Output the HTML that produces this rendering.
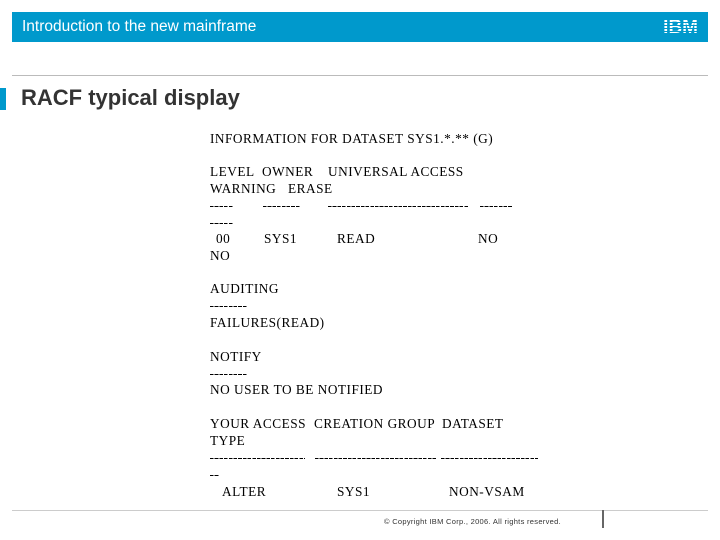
<!DOCTYPE html><html><head><style>
body{margin:0;width:720px;height:540px;background:#fff;position:relative;overflow:hidden;font-family:"Liberation Sans",sans-serif}
.bar{position:absolute;left:12px;top:12px;width:696px;height:30px;background:#0099cc}
.bar span{position:absolute;left:10px;top:6px;color:#fff;font-size:15.5px;font-weight:300}
.ibm{position:absolute;right:10px;top:5px;font-weight:bold;font-size:19px;background:repeating-linear-gradient(#fff 0 2px,transparent 2px 3px);-webkit-background-clip:text;background-clip:text;-webkit-text-fill-color:transparent}
.t{position:absolute;font-family:"Liberation Serif",serif;font-size:13.3px;color:#000;white-space:pre;line-height:17px;letter-spacing:0.5px}
.d{position:absolute;height:1px;background:repeating-linear-gradient(90deg,#000 0 3.6px,transparent 3.6px 4.7px)}
</style></head><body>
<div class="bar"><span>Introduction to the new mainframe</span><div class="ibm">IBM</div></div>
<div style="position:absolute;left:12px;top:75px;width:696px;height:1px;background:#bbb"></div>
<div style="position:absolute;left:0;top:88px;width:6px;height:22px;background:#0099cc"></div>
<div style="position:absolute;left:21px;top:85px;font-size:22px;font-weight:bold;color:#333">RACF typical display</div>

<div class="t" style="left:210px;top:130px">INFORMATION FOR DATASET SYS1.*.** (G)</div>

<div class="t" style="left:210px;top:163px">LEVEL</div>
<div class="t" style="left:262px;top:163px">OWNER</div>
<div class="t" style="left:328px;top:163px">UNIVERSAL ACCESS</div>
<div class="t" style="left:210px;top:180px">WARNING</div>
<div class="t" style="left:288px;top:180px">ERASE</div>
<div class="d" style="left:210px;top:206px;width:23px"></div>
<div class="d" style="left:263px;top:206px;width:37px"></div>
<div class="d" style="left:328px;top:206px;width:140px"></div>
<div class="d" style="left:480px;top:206px;width:32px"></div>
<div class="d" style="left:210px;top:223px;width:23px"></div>
<div class="t" style="left:216px;top:230px">00</div>
<div class="t" style="left:264px;top:230px">SYS1</div>
<div class="t" style="left:337px;top:230px">READ</div>
<div class="t" style="left:478px;top:230px">NO</div>
<div class="t" style="left:210px;top:247px">NO</div>

<div class="t" style="left:210px;top:280px">AUDITING</div>
<div class="d" style="left:210px;top:306px;width:37px"></div>
<div class="t" style="left:210px;top:314px">FAILURES(READ)</div>

<div class="t" style="left:210px;top:348px">NOTIFY</div>
<div class="d" style="left:210px;top:374px;width:37px"></div>
<div class="t" style="left:210px;top:381px">NO USER TO BE NOTIFIED</div>

<div class="t" style="left:210px;top:415px">YOUR ACCESS</div>
<div class="t" style="left:314px;top:415px">CREATION GROUP</div>
<div class="t" style="left:442px;top:415px">DATASET</div>
<div class="t" style="left:210px;top:432px">TYPE</div>
<div class="d" style="left:210px;top:458px;width:95px"></div>
<div class="d" style="left:315px;top:458px;width:121px"></div>
<div class="d" style="left:441px;top:458px;width:97px"></div>
<div class="d" style="left:210px;top:475px;width:9px"></div>
<div class="t" style="left:222px;top:483px">ALTER</div>
<div class="t" style="left:337px;top:483px">SYS1</div>
<div class="t" style="left:449px;top:483px">NON-VSAM</div>

<div style="position:absolute;left:12px;top:510px;width:696px;height:1px;background:#ccc"></div>
<div style="position:absolute;left:602px;top:510px;width:2px;height:18px;background:#666"></div>
<div style="position:absolute;left:384px;top:517px;font-size:7.5px;letter-spacing:0.3px;color:#333">© Copyright IBM Corp., 2006. All rights reserved.</div>
</body></html>
